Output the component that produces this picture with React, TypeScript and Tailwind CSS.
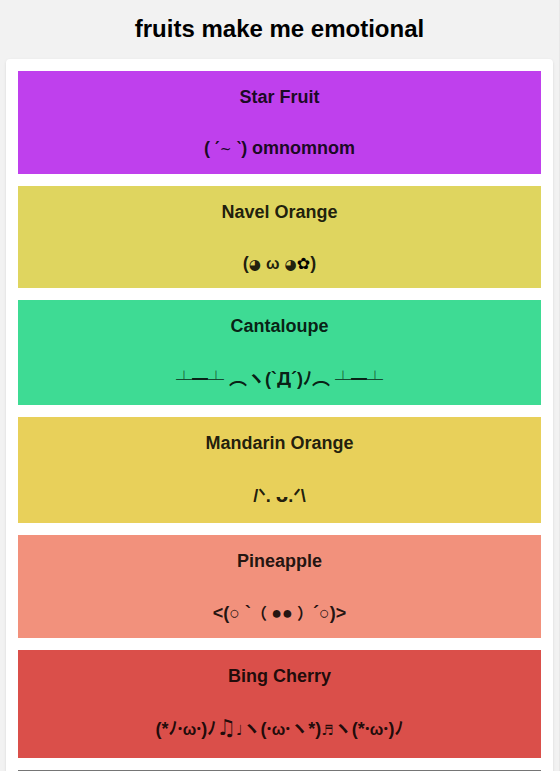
import React from "react";

type Part = { text: string; className?: string };
type Fruit = { name: string; color: string; height: string; face: Part[] };

const jp = "font-['Noto_Sans_CJK_JP',sans-serif]";
const dv = "font-['DejaVu_Sans',sans-serif]";
const noto = "font-['Noto_Sans',sans-serif]";

const fruits: Fruit[] = [
  {
    name: "Star Fruit",
    color: "bg-[#bf40ed]",
    height: "h-5 leading-5",
    face: [
      { text: "( " },
      { text: "′", className: dv },
      { text: "~", className: `${dv} text-[14px] font-normal` },
      { text: " " },
      { text: "‵", className: dv },
      { text: ") omnomnom" },
    ],
  },
  {
    name: "Navel Orange",
    color: "bg-[#dfd55f]",
    height: "h-[19px] leading-5",
    face: [
      { text: "(" },
      { text: "◕", className: `${dv} text-[14px]` },
      { text: " " },
      { text: "ω", className: "text-[16px]" },
      { text: " " },
      { text: "◕", className: `${dv} text-[14px]` },
      { text: "✿", className: `${dv} text-[16px] text-black` },
      { text: ")" },
    ],
  },
  {
    name: "Cantaloupe",
    color: "bg-[#3edb94]",
    height: "h-[22px] leading-5",
    face: [
      { text: "┴━┴", className: `${jp} text-[16px] font-normal` },
      { text: " " },
      { text: "︵ヽ", className: jp },
      { text: "(`" },
      { text: "Д", className: noto },
      { text: "´)" },
      { text: "ﾉ︵", className: jp },
      { text: " " },
      { text: "┴━┴", className: `${jp} text-[16px] font-normal` },
    ],
  },
  {
    name: "Mandarin Orange",
    color: "bg-[#e8d05a]",
    height: "h-[23px] leading-[23px]",
    face: [
      { text: "/" },
      { text: "ᐠ", className: dv },
      { text: ". " },
      { text: "ᴗ", className: dv },
      { text: "." },
      { text: "ᐟ", className: dv },
      { text: "\\" },
    ],
  },
  {
    name: "Pineapple",
    color: "bg-[#f2917c]",
    height: "h-5 leading-5",
    face: [
      { text: "<(○ `" },
      { text: "（", className: `${jp} text-[16px]` },
      { text: "●●", className: "px-1" },
      { text: "）", className: `${jp} text-[16px]` },
      { text: "´○)>" },
    ],
  },
  {
    name: "Bing Cherry",
    color: "bg-[#da4f4a]",
    height: "h-[25px] leading-[22px]",
    face: [
      { text: "(*ﾉ" },
      { text: "·", className: noto },
      { text: "ω", className: "text-[16px]" },
      { text: "·", className: noto },
      { text: ")ﾉ" },
      { text: "♫", className: `${dv} text-[22px]` },
      { text: "♩", className: `${dv} text-[14px]` },
      { text: "ヽ(" },
      { text: "·", className: noto },
      { text: "ω", className: "text-[16px]" },
      { text: "·", className: noto },
      { text: "ヽ*)" },
      { text: "♬", className: `${dv} text-[14px]` },
      { text: "ヽ(*" },
      { text: "·", className: noto },
      { text: "ω", className: "text-[16px]" },
      { text: "·", className: noto },
      { text: ")ﾉ" },
    ],
  },
];

function FruitCard({ fruit }: { fruit: Fruit }) {
  return (
    <li className={`${fruit.color} p-4 text-center text-lg font-bold text-black/87`}>
      <h2 className="mb-[31px] leading-5">{fruit.name}</h2>
      <p className={`flex items-baseline justify-center whitespace-pre ${fruit.height}`}>
        {fruit.face.map((part, i) => (
          <span key={i} className={part.className}>
            {part.text}
          </span>
        ))}
      </p>
    </li>
  );
}

export default function App() {
  return (
    <main className="h-screen overflow-hidden border-r border-[#e8e8e8] bg-[#f2f2f2] px-1.5 font-['Liberation_Sans','Noto_Sans_CJK_JP',sans-serif]">
      <h1 className="pt-[15px] pb-4 text-center text-2xl leading-7 font-bold text-black">
        fruits make me emotional
      </h1>
      <ul className="flex flex-col gap-3 rounded-sm bg-white p-3 shadow-sm">
        {fruits.map((fruit) => (
          <FruitCard key={fruit.name} fruit={fruit} />
        ))}
        <li className="h-24 bg-[#757575]" />
      </ul>
    </main>
  );
}
